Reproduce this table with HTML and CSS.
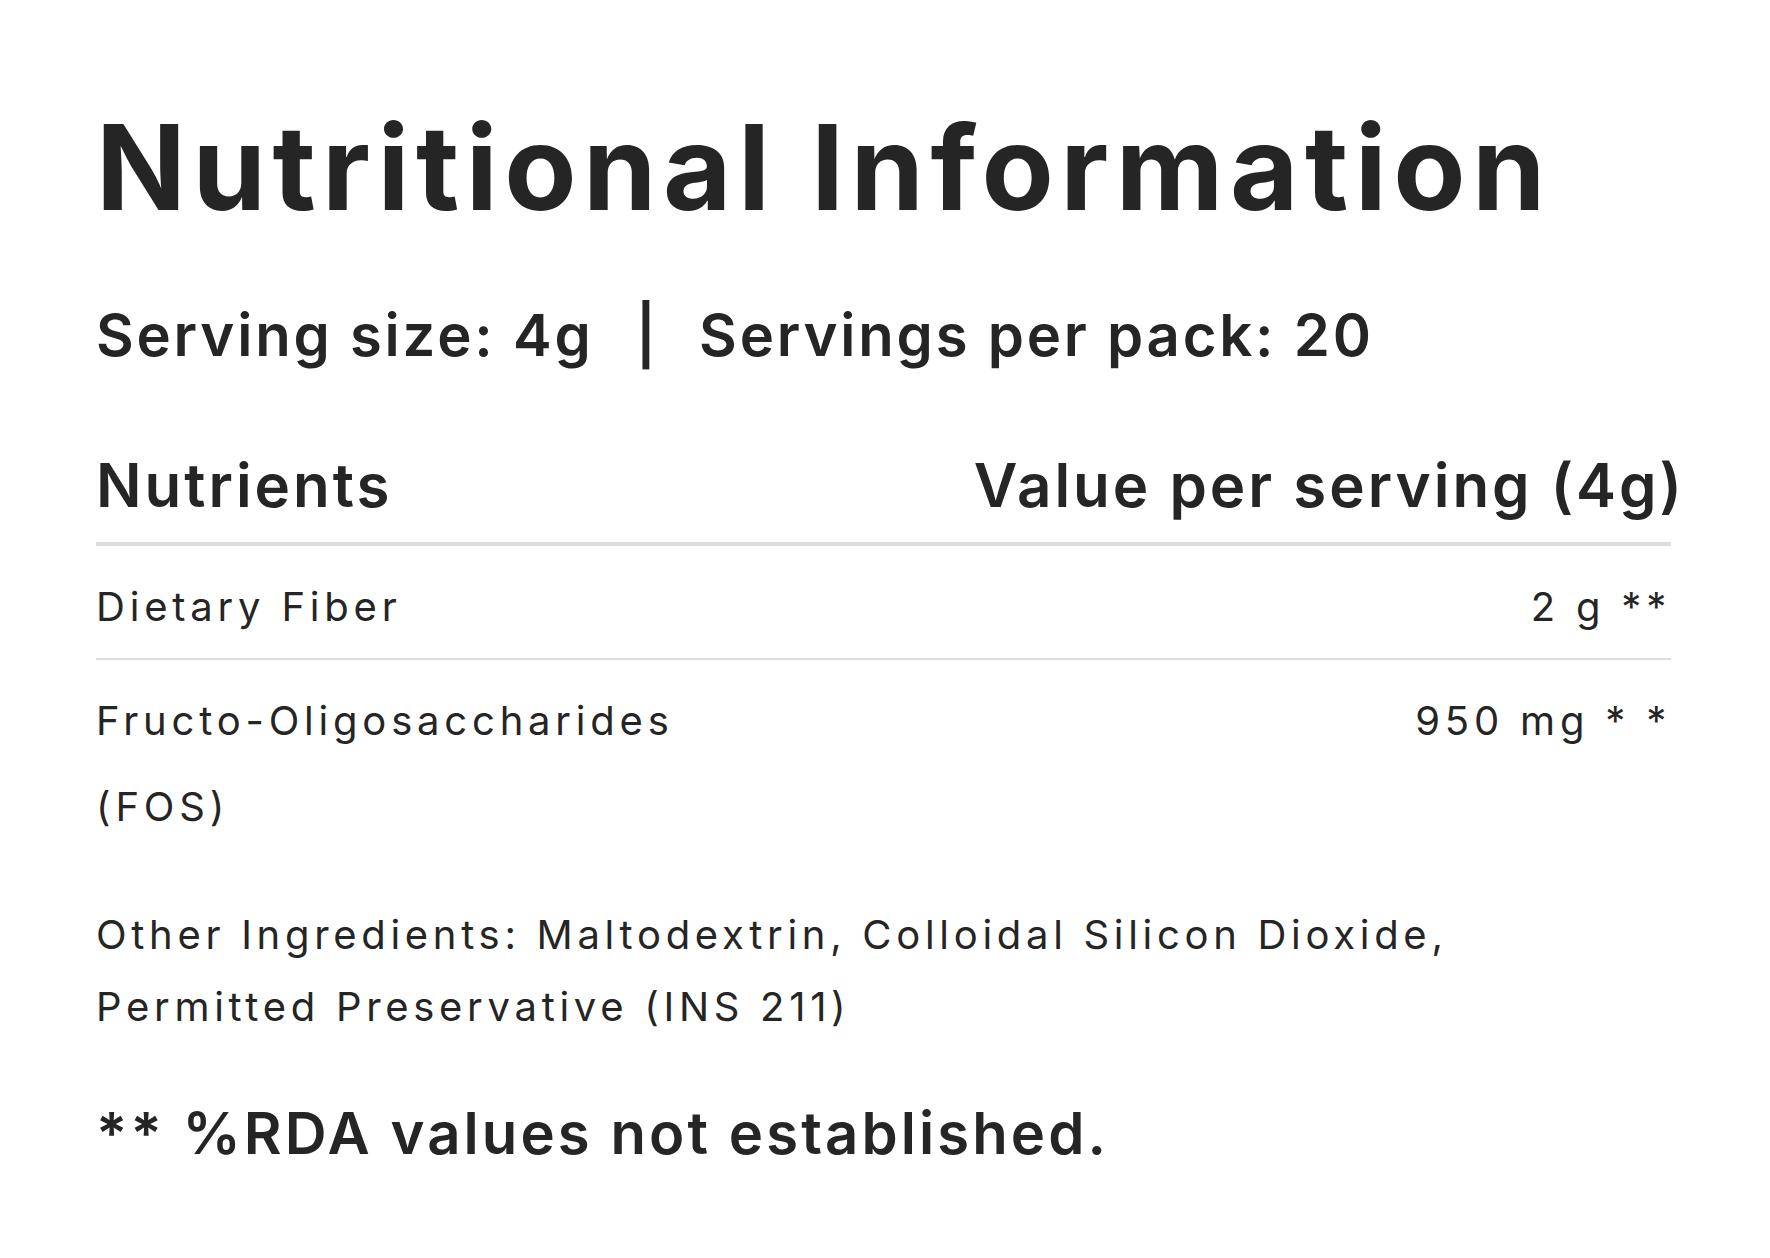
FILE: index.html
```html
<!DOCTYPE html>
<html lang="en">
<head>
<meta charset="utf-8">
<title>Nutritional Information</title>
<link rel="stylesheet" href="styles.css">
</head>
<body>
<main class="panel">
  <h1 class="title">Nutritional Information</h1>
  <p class="serving"><span>Serving size: 4g</span><span class="sep">|</span><span>Servings per pack: 20</span></p>
  <div class="facts">
    <div class="facts-head">
      <span>Nutrients</span>
      <span>Value per serving (4g)</span>
    </div>
    <div class="facts-row">
      <span class="name">Dietary Fiber</span>
      <span class="val">2 g **</span>
    </div>
    <div class="facts-row last">
      <span class="name">Fructo-Oligosaccharides<br>(FOS)</span>
      <span class="val">950 mg * *</span>
    </div>
  </div>
  <p class="other">Other Ingredients: Maltodextrin, Colloidal Silicon Dioxide,<br>Permitted Preservative (INS 211)</p>
  <p class="note">** %RDA values not established.</p>
</main>
</body>
</html>
```
FILE: styles.css
```css
html, body {
  margin: 0;
  padding: 0;
  background: #ffffff;
}
body {
  font-family: Inter, "Noto Sans", "Liberation Sans", sans-serif;
  color: #252525;
}
.panel {
  padding: 97px 0 0 96px;
  width: 1575px;
}
.title {
  margin: 0;
  font-size: 118px;
  line-height: 1.2;
  font-weight: 700;
  letter-spacing: 6.5px;
}
.serving {
  margin: 61px 0 0;
  font-size: 58px;
  line-height: 70px;
  font-weight: 600;
  letter-spacing: 2.8px;
  display: flex;
}
.serving .sep {
  margin: 0 40px 0 42px;
}
.facts {
  margin-top: 79px;
}
.facts-head {
  display: flex;
  justify-content: space-between;
  margin-right: -14px;
  font-size: 60px;
  line-height: 72px;
  font-weight: 600;
  letter-spacing: 3px;
  padding-bottom: 23px;
  position: relative;
}
.facts-head::after {
  content: "";
  position: absolute;
  left: 0;
  right: 14px;
  bottom: 0;
  height: 2px;
  background: #dcdcdc;
}
.facts-row {
  display: flex;
  justify-content: space-between;
  font-size: 40px;
  line-height: 86px;
  letter-spacing: 4.8px;
  padding: 18px 0 8px 0;
  border-top: 2px solid #dcdcdc;
}
.facts-row.last {
  padding-bottom: 0;
}
.facts-row .val {
  text-align: right;
}
.other {
  margin: 49px 0 0;
  font-size: 40px;
  line-height: 72px;
  letter-spacing: 4.7px;
}
.note {
  margin: 55px 0 0;
  font-size: 58px;
  line-height: 70px;
  font-weight: 600;
  letter-spacing: 3.1px;
}
```
